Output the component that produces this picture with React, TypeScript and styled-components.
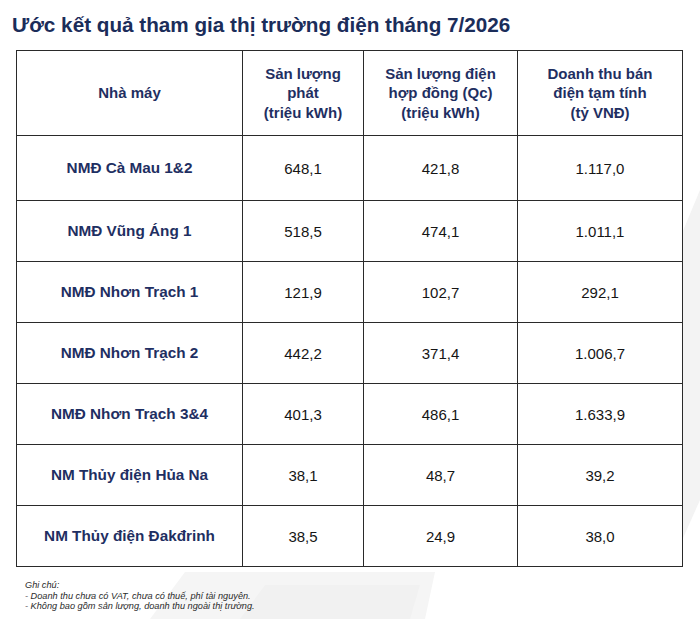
import React from "react";
import styled, { createGlobalStyle } from "styled-components";

const Global = createGlobalStyle`
  html, body { margin: 0; padding: 0; background: #ffffff; }
  body { font-family: "Liberation Sans", Arial, sans-serif; }
`;

const Page = styled.div`
  position: relative;
  width: 700px;
  height: 619px;
  overflow: hidden;
  background: #ffffff;
`;

const Watermark = styled.svg`
  position: absolute;
  inset: 0;
  width: 700px;
  height: 619px;
  z-index: 0;
`;

const Content = styled.div`
  position: relative;
  z-index: 1;
  display: flex;
  flex-direction: column;
  padding: 13px 0 0 16px;
`;

const Title = styled.h1`
  margin: 0 0 13px -4px;
  font-size: 20.7px;
  line-height: 24px;
  font-weight: 700;
  color: #1b2d5a;
  white-space: nowrap;
`;

const Table = styled.table`
  width: 666px;
  table-layout: fixed;
  border-collapse: collapse;
  background: #ffffff;
`;

const Col = styled.col<{ $w: number }>`
  width: ${(p) => p.$w}px;
`;

const HeadCell = styled.th`
  border: 1.5px solid #2a2a2a;
  height: 84px;
  padding: 0 6px;
  font-size: 15px;
  line-height: 19.5px;
  font-weight: 700;
  color: #1f2f62;
  text-align: center;
  vertical-align: middle;
`;

const Row = styled.tr<{ $h: number }>`
  height: ${(p) => p.$h}px;
`;

const NameCell = styled.td`
  border: 1.5px solid #2a2a2a;
  font-size: 15.3px;
  font-weight: 700;
  color: #1f2f62;
  text-align: center;
  vertical-align: middle;
  white-space: nowrap;
`;

const NumCell = styled.td`
  border: 1.5px solid #2a2a2a;
  font-size: 15px;
  color: #151515;
  text-align: center;
  vertical-align: middle;
`;

const Notes = styled.div`
  margin: 13px 0 0 9px;
  font-size: 9.2px;
  line-height: 10.5px;
  font-style: italic;
  color: #2b2b2b;
`;

const rows = [
  ["NMĐ Cà Mau 1&2", "648,1", "421,8", "1.117,0"],
  ["NMĐ Vũng Áng 1", "518,5", "474,1", "1.011,1"],
  ["NMĐ Nhơn Trạch 1", "121,9", "102,7", "292,1"],
  ["NMĐ Nhơn Trạch 2", "442,2", "371,4", "1.006,7"],
  ["NMĐ Nhơn Trạch 3&4", "401,3", "486,1", "1.633,9"],
  ["NM Thủy điện Hủa Na", "38,1", "48,7", "39,2"],
  ["NM Thủy điện Đakđrinh", "38,5", "24,9", "38,0"],
];

export default function App() {
  return (
    <Page>
      <Global />
      <Watermark viewBox="0 0 700 619">
        <polygon points="700,190 680,238 680,545 700,500" fill="#f3f3f3" />
        <polygon points="150,619 185,572 435,572 425,619" fill="#f5f5f5" />
        <polygon points="240,619 265,585 420,585 410,619" fill="#f1f1f1" />
      </Watermark>
      <Content>
        <Title>Ước kết quả tham gia thị trường điện tháng 7/2026</Title>
        <Table>
          <colgroup>
            <Col $w={226} />
            <Col $w={121} />
            <Col $w={154} />
            <Col $w={165} />
          </colgroup>
          <thead>
            <tr>
              <HeadCell>Nhà máy</HeadCell>
              <HeadCell>
                Sản lượng
                <br />
                phát
                <br />
                (triệu kWh)
              </HeadCell>
              <HeadCell>
                Sản lượng điện
                <br />
                hợp đồng (Qc)
                <br />
                (triệu kWh)
              </HeadCell>
              <HeadCell>
                Doanh thu bán
                <br />
                điện tạm tính
                <br />
                (tỷ VNĐ)
              </HeadCell>
            </tr>
          </thead>
          <tbody>
            {rows.map((r, i) => (
              <Row key={r[0]} $h={i === 0 ? 65 : 61}>
                <NameCell>{r[0]}</NameCell>
                <NumCell>{r[1]}</NumCell>
                <NumCell>{r[2]}</NumCell>
                <NumCell>{r[3]}</NumCell>
              </Row>
            ))}
          </tbody>
        </Table>
        <Notes>
          Ghi chú:
          <br />- Doanh thu chưa có VAT, chưa có thuế, phí tài nguyên.
          <br />- Không bao gồm sản lượng, doanh thu ngoài thị trường.
        </Notes>
      </Content>
    </Page>
  );
}
